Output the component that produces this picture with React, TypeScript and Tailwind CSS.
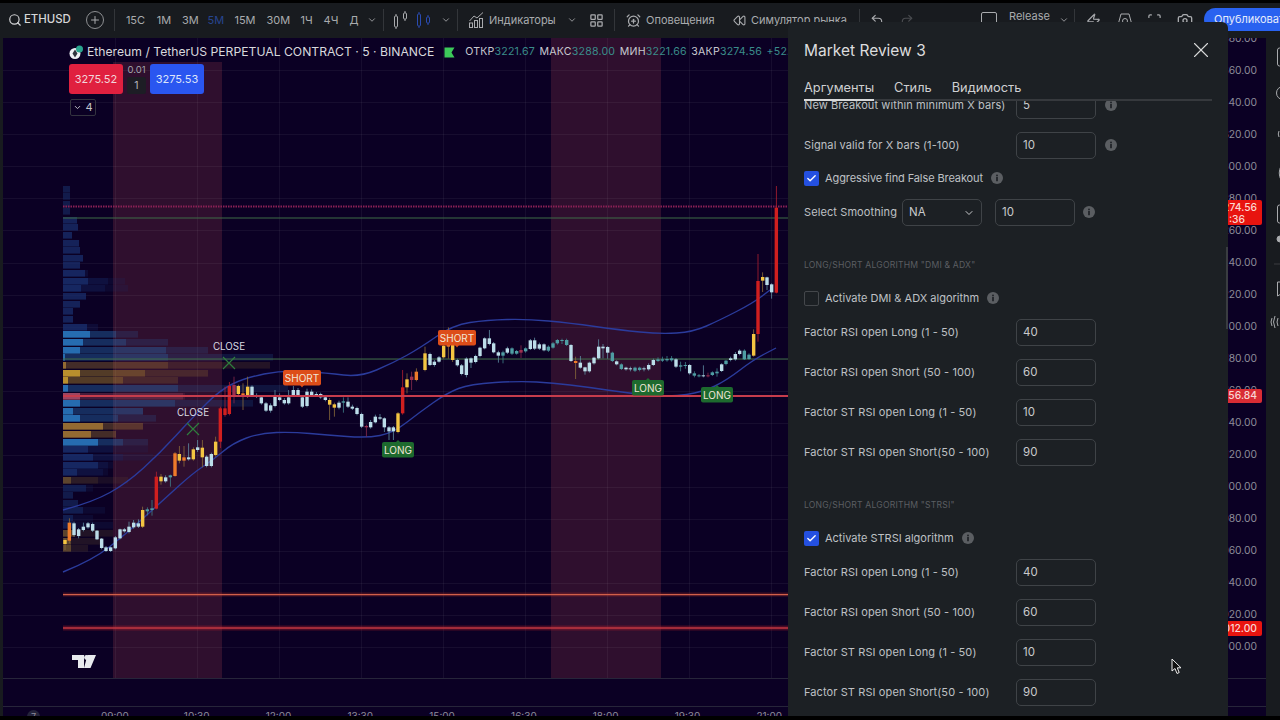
import { AlarmClockPlus, Camera, Check, ChevronDown, LayoutGrid, Plus, Redo2, Rewind, Scan, Search, Undo2, X, Zap } from 'lucide-react';

const COLORS: Record<string, string> = { r: '#d01f1f', y: '#f4c542', o: '#ee7a2a', b: '#bcdde9', t: '#4f9da3', d: '#9c2f4f' };

// [x, top, bottom, wickTop, wickBottom, colour] read off the 3x crops
type Candle = [number, number, number, number, number, string];

const LEFT: Candle[] = [
  [15, 510, 522, 505, 540, 'y'], [28, 458, 512, 445, 520, 'o'], [42, 460, 495, 455, 500, 'b'], [56, 478, 498, 474, 505, 'b'],
  [70, 470, 480, 458, 484, 'b'], [84, 460, 472, 456, 476, 'b'], [98, 462, 482, 458, 486, 'b'], [111, 482, 508, 480, 510, 'b'],
  [125, 506, 534, 504, 538, 'b'], [138, 532, 543, 528, 546, 'b'], [152, 532, 543, 530, 546, 'b'], [166, 502, 535, 498, 538, 'b'],
  [180, 478, 505, 476, 508, 'b'], [193, 478, 484, 474, 488, 'b'], [207, 470, 486, 455, 490, 'b'], [221, 458, 472, 450, 476, 'b'],
  [235, 460, 470, 448, 474, 'b'], [248, 420, 470, 410, 474, 'y'], [262, 418, 424, 412, 436, 't'], [276, 415, 420, 390, 437, 't'],
  [289, 320, 416, 305, 418, 'r'], [303, 320, 334, 312, 344, 'y'], [317, 322, 334, 316, 338, 'b'], [331, 316, 322, 314, 350, 't'],
  [345, 250, 318, 246, 320, 'o'], [358, 252, 272, 228, 280, 'y'], [372, 262, 272, 228, 290, 'o'], [386, 262, 268, 220, 272, 'b'],
  [400, 238, 268, 232, 272, 'y'], [413, 232, 240, 210, 246, 'b'], [427, 233, 262, 210, 292, 'y'], [440, 260, 288, 256, 292, 'b'],
  [454, 252, 288, 248, 292, 'b'], [467, 215, 255, 200, 260, 'y'], [481, 115, 215, 110, 234, 'r'], [495, 115, 135, 50, 140, 'r'],
  [508, 48, 132, 36, 136, 'r'], [522, 45, 75, 20, 100, 'd'], [535, 48, 72, 44, 76, 'y'], [549, 70, 75, 40, 120, 'o'],
  [563, 50, 78, 20, 84, 'y'], [576, 50, 75, 46, 80, 'b'], [590, 75, 80, 70, 84, 'b'], [604, 82, 100, 78, 104, 'b'],
  [618, 100, 122, 96, 126, 'b'], [632, 106, 122, 100, 128, 'b'], [645, 80, 108, 60, 112, 'b'], [659, 82, 90, 70, 94, 'b'],
  [673, 90, 100, 84, 104, 'b'], [686, 82, 100, 60, 104, 'b'], [700, 60, 75, 48, 78, 'b'], [714, 60, 75, 54, 80, 'b'],
  [727, 82, 110, 78, 114, 'b'], [741, 65, 108, 56, 112, 'b'], [755, 65, 75, 58, 80, 'b'], [769, 72, 75, 66, 78, 'b'],
  [782, 72, 82, 68, 86, 'b'], [796, 82, 90, 78, 94, 'b'], [809, 90, 104, 84, 150, 'y'], [823, 103, 113, 98, 140, 'y'],
  [837, 98, 113, 92, 118, 'b'], [850, 94, 98, 82, 128, 't'], [864, 95, 110, 82, 114, 'b'], [877, 110, 116, 104, 120, 'b'],
  [891, 114, 132, 110, 136, 'b'], [905, 132, 170, 128, 174, 'b'], [919, 168, 172, 164, 200, 'd'], [932, 156, 172, 150, 176, 'b'],
  [946, 140, 157, 134, 160, 'b'], [960, 142, 146, 132, 150, 'b'], [973, 145, 172, 142, 186, 'b'], [987, 172, 184, 168, 210, 'b'],
  [1000, 172, 184, 168, 210, 'b'], [1014, 130, 186, 126, 190, 'y'], [1028, 52, 130, 0, 134, 'r'], [1041, 28, 52, 10, 70, 'y'],
  [1055, 20, 30, 5, 60, 'd'], [1069, 5, 30, -5, 34, 'o'],
];

const RIGHT: Candle[] = [
  [15, 520, 570, 500, 574, 'y'], [30, 522, 555, 518, 558, 'b'], [43, 545, 555, 540, 560, 'b'], [57, 532, 545, 528, 548, 'b'],
  [71, 497, 532, 480, 536, 'y'], [85, 490, 500, 442, 536, 'o'], [98, 495, 540, 490, 546, 'y'], [112, 540, 556, 536, 560, 'b'],
  [125, 556, 582, 552, 586, 'b'], [139, 536, 585, 532, 592, 'b'], [153, 535, 548, 532, 564, 'b'], [167, 528, 546, 524, 550, 'b'],
  [180, 503, 528, 500, 532, 'b'], [194, 475, 505, 472, 508, 'b'], [208, 475, 492, 450, 496, 'b'], [221, 490, 517, 486, 520, 'b'],
  [235, 517, 527, 512, 548, 'b'], [249, 517, 527, 512, 550, 't'], [262, 505, 518, 500, 522, 'b'], [276, 505, 521, 502, 525, 't'],
  [290, 513, 521, 510, 524, 't'], [303, 510, 518, 496, 534, 'd'], [317, 505, 514, 502, 518, 't'], [331, 481, 507, 477, 510, 'b'],
  [344, 481, 506, 473, 510, 'b'], [358, 493, 506, 488, 510, 'b'], [372, 493, 511, 490, 514, 'b'], [385, 500, 512, 496, 516, 't'],
  [399, 490, 503, 486, 506, 't'], [412, 480, 490, 477, 494, 't'], [426, 480, 483, 476, 492, 't'], [440, 480, 495, 476, 498, 't'],
  [453, 495, 543, 492, 546, 'b'], [467, 543, 549, 530, 597, 'o'], [481, 548, 563, 528, 566, 'b'], [495, 562, 574, 560, 584, 'b'],
  [508, 548, 574, 545, 578, 'b'], [522, 533, 550, 530, 554, 'b'], [536, 500, 535, 478, 538, 'b'], [549, 500, 505, 492, 535, 'b'],
  [563, 501, 518, 498, 536, 'b'], [577, 518, 543, 515, 546, 't'], [590, 544, 553, 541, 556, 'b'], [604, 553, 567, 550, 570, 't'],
  [618, 563, 568, 560, 572, 'b'], [631, 565, 568, 560, 574, 'b'], [645, 563, 572, 560, 576, 't'], [659, 563, 570, 560, 574, 't'],
  [672, 565, 568, 560, 574, 'b'], [686, 555, 568, 550, 572, 'b'], [700, 540, 555, 536, 558, 'b'], [714, 538, 543, 532, 546, 't'],
  [727, 538, 542, 530, 546, 't'], [741, 537, 541, 528, 545, 't'], [755, 535, 541, 528, 545, 't'], [768, 538, 560, 534, 564, 'b'],
  [782, 556, 560, 545, 574, 't'], [796, 555, 558, 546, 566, 't'], [809, 555, 580, 552, 584, 'b'], [823, 580, 587, 574, 592, 't'],
  [837, 586, 589, 582, 592, 't'], [850, 586, 589, 556, 592, 'b'], [864, 586, 589, 578, 592, 'd'], [877, 577, 585, 574, 588, 't'],
  [891, 575, 580, 565, 590, 't'], [905, 553, 573, 550, 576, 'b'], [918, 542, 552, 540, 556, 't'], [932, 535, 540, 530, 544, 'b'],
  [946, 522, 538, 516, 542, 'b'], [959, 512, 522, 508, 526, 'b'], [973, 512, 538, 508, 540, 't'], [987, 524, 537, 520, 540, 't'],
  [1001, 462, 527, 448, 530, 'y'], [1014, 303, 462, 222, 485, 'r'], [1028, 291, 302, 277, 336, 'y'], [1041, 292, 315, 290, 330, 'b'],
  [1055, 313, 337, 310, 356, 'b'], [1069, 83, 338, 18, 340, 'r'],
];

// volume profile rows: [y, bright, mid, faint, kind]
const PROFILE: [number, number, number, number, string][] = [
  [186, 7, 0, 0, 'f'], [193, 7, 0, 0, 'f'], [201, 7, 0, 0, 'f'], [208, 7, 0, 0, 'f'], [217, 14, 0, 0, 'k'], [224, 15, 0, 0, 'k'],
  [232, 9, 0, 0, 'k'], [240, 16, 0, 0, 'k'], [247, 17, 0, 0, 'k'], [255, 20, 0, 0, 'k'], [262, 17, 0, 0, 'k'], [270, 22, 25, 0, 'k'],
  [278, 25, 45, 62, 'k'], [285, 18, 42, 65, 'k'], [293, 23, 0, 0, 'k'], [301, 17, 0, 0, 'k'], [308, 10, 0, 0, 'k'], [316, 10, 0, 0, 'k'],
  [324, 24, 35, 0, 'k'], [331, 27, 53, 75, 'u'], [339, 20, 63, 105, 'u'], [347, 17, 103, 145, 'u'], [354, 2, 105, 210, 'u'],
  [362, 3, 105, 207, 'a'], [370, 17, 82, 145, 'g'], [377, 5, 60, 115, 'g'], [385, 5, 115, 225, 'u'], [393, 17, 120, 122, 'p'],
  [400, 17, 112, 190, 'u'], [408, 10, 80, 80, 'u'], [415, 17, 55, 93, 'u'], [423, 40, 80, 80, 'a'], [431, 28, 53, 53, 'a'],
  [439, 35, 60, 85, 'u'], [446, 25, 50, 85, 'k'], [454, 30, 60, 90, 'k'], [462, 35, 45, 50, 'k'], [469, 14, 40, 45, 'k'],
  [477, 8, 35, 65, 'c'], [485, 23, 30, 0, 'f'], [492, 10, 0, 0, 'f'], [500, 15, 0, 0, 'f'], [507, 20, 42, 0, 'f'], [515, 10, 30, 0, 'f'],
  [522, 10, 50, 0, 'f'], [530, 12, 50, 0, 'c'], [538, 8, 40, 0, 'c'], [545, 8, 25, 0, 'c'],
];

const PROFILE_FILL: Record<string, string> = { f: '#16265c', k: '#1a3070', u: '#2a7cc4', a: '#a87a34', c: '#6a5030', g: '#d3a530', p: '#b0506a' };

const UPPER = [[63, 510], [93, 502], [127, 483], [160, 453], [193, 417], [220, 390], [245, 378], [283, 370], [327, 373], [360, 377], [393, 363], [420, 348], [453, 325], [487, 320], [527, 319], [570, 323], [620, 330], [660, 334], [693, 332], [720, 320], [753, 303], [770, 290]];
const LOWER = [[63, 572], [93, 560], [127, 533], [160, 503], [193, 473], [213, 460], [233, 443], [260, 433], [293, 432], [327, 435], [367, 438], [393, 433], [420, 412], [447, 393], [470, 384], [520, 381], [553, 383], [587, 387], [627, 393], [670, 397], [703, 392], [727, 380], [753, 360], [776, 348]];

const smooth = (pts: number[][]) => {
  let d = `M${pts[0][0]} ${pts[0][1]}`;
  for (let i = 1; i < pts.length - 1; i++) {
    const mx = (pts[i][0] + pts[i + 1][0]) / 2;
    const my = (pts[i][1] + pts[i + 1][1]) / 2;
    d += ` Q${pts[i][0]} ${pts[i][1]} ${mx} ${my}`;
  }
  const last = pts[pts.length - 1];
  return d + ` L${last[0]} ${last[1]}`;
};

const GRID_X = [115, 197, 279, 361, 443, 525, 607, 689, 771, 853, 935, 1017, 1099, 1181];
const GRID_Y = [70, 102, 134, 166, 198, 230, 263, 295, 327, 359, 391, 423, 455, 487, 519, 551, 583, 615, 647];
const PRICES = ['3380.00', '3360.00', '3340.00', '3320.00', '3300.00', '3280.00', '3260.00', '3240.00', '3220.00', '3200.00', '3180.00', '3160.00', '3140.00', '3120.00', '3100.00', '3080.00', '3060.00', '3040.00', '3020.00', '3000.00'];
const TIMES = ['09:00', '10:30', '12:00', '13:30', '15:00', '16:30', '18:00', '19:30', '21:00', '22:30', '00:00', '01:30', '03:00', '04:30'];

function CandleSet({ items, bx, by }: { items: Candle[]; bx: number; by: number }) {
  return (
    <g>
      {items.map(([x, top, bottom, wt, wb, c], i) => {
        const cx = bx + x / 3;
        const wick = c === 'b' ? '#5f8ea3' : c === 'y' || c === 'o' ? '#8a6a3a' : c === 'r' ? '#b02030' : c === 't' ? '#3f7f8a' : '#8a2a4c';
        return (
          <g key={i}>
            <rect x={cx - 0.4} y={by + wt / 3} width={0.8} height={(wb - wt) / 3} fill={wick} />
            <rect x={cx - 1.7} y={by + top / 3} width={3.4} height={Math.max((bottom - top) / 3, 1)} fill={COLORS[c]} />
          </g>
        );
      })}
    </g>
  );
}

function Badge({ x, y, w, text, fill, up }: { x: number; y: number; w: number; text: string; fill: string; up?: boolean }) {
  return (
    <g>
      <rect x={x - w / 2} y={y - 8} width={w} height={15.5} rx={2} fill={fill} />
      {up ? <path d={`M${x - 2} ${y - 8}L${x} ${y - 10}L${x + 2} ${y - 8}Z`} fill={fill} /> : <path d={`M${x - 2} ${y + 7}L${x} ${y + 9.5}L${x + 2} ${y + 7}Z`} fill={fill} />}
      <text x={x} y={y + 3.6} textAnchor="middle" fontSize="10" fill="#f1e6d8" fontFamily="Inter, sans-serif">{text}</text>
    </g>
  );
}

function CloseMark({ x, y }: { x: number; y: number }) {
  return (
    <g>
      <text x={x} y={y - 13} textAnchor="middle" fontSize="9.8" fill="#d9d9e2" fontFamily="Inter, sans-serif">CLOSE</text>
      <path d={`M${x - 6} ${y - 6}L${x + 6} ${y + 6}M${x + 6} ${y - 6}L${x - 6} ${y + 6}`} stroke="#2f7d3d" strokeWidth="1.2" />
    </g>
  );
}

function ChartDrawing() {
  return (
    <svg viewBox="3 38 1225 640" className="absolute inset-0 w-[1225px] h-[640px]">
      <rect x="113" y="62" width="109" height="616" fill="#2f0f2e" />
      <rect x="551" y="38" width="110" height="640" fill="#2f0f2e" />
      {GRID_X.map((x) => <rect key={x} x={x} y="38" width="1" height="640" fill="#ffffff" opacity="0.05" />)}
      {GRID_Y.map((y) => <rect key={y} x="3" y={y} width="1225" height="1" fill="#ffffff" opacity="0.05" />)}

      {PROFILE.map(([y, a, b, c, kind]) => (
        <g key={y} fill={PROFILE_FILL[kind]}>
          {c > 0 && <rect x="63" y={y} width={c} height="6.6" opacity="0.16" />}
          {b > 0 && <rect x="63" y={y} width={b} height="6.6" opacity="0.24" />}
          <rect x="63" y={y} width={a} height="6.6" opacity={kind === 'k' || kind === 'f' ? 0.7 : 0.8} />
        </g>
      ))}

      <line x1="63" y1="206.5" x2="788" y2="206.5" stroke="#8a2055" strokeWidth="2" strokeDasharray="1.5 1" />
      <rect x="63" y="217.5" width="725" height="1" fill="#3f6c46" />
      <rect x="63" y="358.5" width="725" height="1" fill="#3f6c46" />

      <path d={smooth(UPPER)} fill="none" stroke="#2b3b9c" strokeWidth="1.4" />
      <path d={smooth(LOWER)} fill="none" stroke="#2b3b9c" strokeWidth="1.4" />

      <CandleSet items={LEFT} bx={60} by={370} />
      <CandleSet items={RIGHT} bx={420} by={180} />

      <rect x="63" y="395" width="725" height="2" fill="#c63c4c" />
      <rect x="63" y="592.5" width="725" height="4" fill="#b82e20" opacity="0.3" />
      <rect x="63" y="594" width="725" height="1.2" fill="#d0604a" />
      <rect x="63" y="625.5" width="725" height="5" fill="#b81f2a" opacity="0.35" />
      <rect x="63" y="627.3" width="725" height="1.4" fill="#c83a44" />

      <CloseMark x={229} y={363} />
      <CloseMark x={193} y={429} />
      <Badge x={302} y={378} w={38} text="SHORT" fill="#dd4d19" />
      <Badge x={457} y={338} w={38} text="SHORT" fill="#dd4d19" />
      <Badge x={398} y={450} w={32} text="LONG" fill="#1d6a2e" up />
      <Badge x={648} y={388} w={32} text="LONG" fill="#1d6a2e" up />
      <Badge x={717} y={395} w={32} text="LONG" fill="#1d6a2e" up />

      {/* tv logo */}
      <path d="M72 655H84V668H78V660H72ZM87.5 655H96L90.5 668H84Z" fill="#e8eaee" />
      <circle cx="86.5" cy="657.5" r="2.4" fill="#e8eaee" />
    </svg>
  );
}

function Legend() {
  return (
    <div className="absolute left-[66px] top-[6px] flex flex-col">
      <div className="flex items-center h-[16px] whitespace-nowrap">
        <svg width="15" height="15" viewBox="0 0 15 15" className="mr-[3px]">
          <circle cx="6" cy="8.5" r="5.5" fill="#eef1f5" />
          <path d="M6 4.5L8.5 8.5L6 12.5L3.5 8.5Z" fill="#30343e" />
          <circle cx="10.5" cy="4" r="3.5" fill="#2aa58f" />
        </svg>
        <span className="text-[12.2px] text-[#d8d9dd]">Ethereum / TetherUS PERPETUAL CONTRACT · 5 · BINANCE</span>
        <svg width="11" height="11" viewBox="0 0 11 11" className="ml-[10px]"><path d="M0.5 0.5H10.5L7.5 5.5L10.5 10.5H0.5Z" fill="#3dc95a" /></svg>
        <div className="flex gap-[4.5px] text-[10.6px] ml-[10px] tracking-[0.2px]">
          <span className="text-[#c8cad0]">ОТКР<span className="text-[#3a8d8a]">3221.67</span></span>
          <span className="text-[#c8cad0]">МАКС<span className="text-[#3a8d8a]">3288.00</span></span>
          <span className="text-[#c8cad0]">МИН<span className="text-[#3a8d8a]">3221.66</span></span>
          <span className="text-[#c8cad0]">ЗАКР<span className="text-[#3a8d8a]">3274.56</span></span>
          <span className="text-[#3a8d8a]">+52.89 (+1.64%)</span>
        </div>
      </div>
      <div className="flex mt-[4px] h-[30px]">
        <div className="w-[54px] rounded-[3px] bg-[#e0203f] text-[#f2d5da] text-[11px] flex items-center justify-center">3275.52</div>
        <div className="w-[27px] flex flex-col items-center">
          <span className="text-[9.5px] text-[#a3a5ad] h-[13px] leading-[11px]">0.01</span>
          <span className="w-[19px] h-[17px] rounded-[2px] bg-[#1d1d25] text-[10.5px] text-[#b5b6bb] flex items-center justify-center">1</span>
        </div>
        <div className="w-[54px] rounded-[3px] bg-[#2a56f0] text-[#dde4fb] text-[11px] flex items-center justify-center">3275.53</div>
      </div>
      <div className="mt-[5px] ml-[1px] w-[26px] h-[17px] rounded-[2px] border border-[#33333f] flex items-center justify-center gap-[3px] text-[11px] text-[#c4c5cc]">
        <ChevronDown size={9} strokeWidth={2.5} />4
      </div>
    </div>
  );
}

function PriceAxis() {
  return (
    <div className="w-[60px] h-[640px] overflow-hidden relative">
      <div className="flex flex-col -mt-[15px] items-end pr-[9px] text-[10.3px] text-[#8d8c99]">
        {PRICES.map((p) => <span key={p} className="h-[32px] flex items-center">{p}</span>)}
      </div>
      <div className="absolute right-[4px] top-[162px] w-[56px] h-[25px] rounded-[2px] bg-[#e8140f] text-[10.3px] font-medium text-[#fbd8d0] flex flex-col items-end pr-[5px] leading-[12px] justify-center">
        <span>3274.56</span><span className="pr-[12px]">:36</span>
      </div>
      <div className="absolute right-[4px] top-[351px] w-[56px] h-[14px] rounded-[2px] bg-[#d92c34] text-[10.3px] font-medium text-[#f8d5d5] flex items-center justify-end pr-[5px]">3156.84</div>
      <div className="absolute right-[4px] top-[583px] w-[56px] h-[15px] rounded-[2px] bg-[#e8140f] text-[10.3px] font-medium text-[#f8d5d5] flex items-center justify-end pr-[5px]">3012.00</div>
    </div>
  );
}

function Toolbar() {
  const intervals = [
    { t: '15С', w: 'w-[21px]' }, { t: '1М', w: 'w-[15px]' }, { t: '3М', w: 'w-[15px]' }, { t: '5М', w: 'w-[16px]' }, { t: '15М', w: 'w-[22px]' },
    { t: '30М', w: 'w-[23px]' }, { t: '1Ч', w: 'w-[13px]' }, { t: '4Ч', w: 'w-[15px]' }, { t: 'Д', w: 'w-[10px]' },
  ];
  return (
    <div className="h-[32px] bg-[#181b1f] flex items-center pl-[8px] pt-[2px] text-[11px] text-[#a9abae] whitespace-nowrap overflow-hidden">
      <Search size={14} className="text-[#d5d6d8] shrink-0" />
      <span className="ml-[2px] w-[48px] shrink-0 font-medium text-[#d5d6d8] text-[11.4px]">ETHUSD</span>
      <span className="ml-[14px] w-[18px] h-[18px] shrink-0 rounded-full border border-[#8d8f92] flex items-center justify-center"><Plus size={12} /></span>
      <span className="ml-[10px] w-px h-[22px] shrink-0 bg-[#33363a]" />
      <div className="ml-[10px] flex items-center gap-[10.5px] shrink-0">
        {intervals.map((i) => <span key={i.t} className={`${i.w} text-center ${i.t === '5М' ? 'text-[#27458f]' : ''}`}>{i.t}</span>)}
      </div>
      <ChevronDown size={10} className="ml-[8px] shrink-0" />
      <span className="ml-[6px] w-px h-[22px] shrink-0 bg-[#33363a]" />
      <svg width="16" height="18" viewBox="0 0 16 18" fill="none" stroke="#a9abae" className="ml-[9px] shrink-0">
        <rect x="1.5" y="5" width="3" height="11" rx="1" /><path d="M3 3v2M3 16v2" />
        <rect x="10.5" y="2" width="3" height="6" rx="1" /><path d="M12 0v2M12 8v2" />
      </svg>
      <svg width="16" height="18" viewBox="0 0 16 18" fill="none" stroke="#2a4bb0" className="ml-[7px] shrink-0">
        <rect x="1.5" y="3" width="3" height="12" rx="1" /><path d="M3 1v2M3 15v2" />
        <rect x="10.5" y="6" width="3" height="6" rx="1" /><path d="M12 4v2M12 12v2" />
      </svg>
      <ChevronDown size={10} className="ml-[9px] shrink-0" />
      <span className="ml-[6px] w-px h-[22px] shrink-0 bg-[#33363a]" />
      <svg width="15" height="16" viewBox="0 0 15 16" fill="none" stroke="#a9abae" className="ml-[11px] shrink-0">
        <path d="M0.5 9L5 4L8 6L14 0.5" /><rect x="0.5" y="11" width="3" height="4.5" /><rect x="5.5" y="8.5" width="3" height="7" /><rect x="10.5" y="6.5" width="3" height="9" />
      </svg>
      <span className="ml-[5px] w-[67px] shrink-0">Индикаторы</span>
      <ChevronDown size={10} className="ml-[11px] shrink-0" />
      <LayoutGrid size={15} className="ml-[12px] shrink-0" />
      <span className="ml-[10px] w-px h-[22px] shrink-0 bg-[#33363a]" />
      <AlarmClockPlus size={15} className="ml-[11px] shrink-0" />
      <span className="ml-[5px] w-[69px] shrink-0">Оповещения</span>
      <Rewind size={13} className="ml-[18px] shrink-0" />
      <span className="ml-[5px] w-[96px] shrink-0">Симулятор рынка</span>
      <span className="ml-[12px] w-px h-[22px] shrink-0 bg-[#33363a]" />
      <Undo2 size={14} className="ml-[10px] shrink-0" />
      <Redo2 size={14} className="ml-[16px] shrink-0 text-[#4a4c50]" />
      <span className="ml-[67px] w-[16px] h-[16px] shrink-0 rounded-[2px] border border-[#a9abae]" />
      <span className="ml-[12px] -mt-[7px] w-[40px] shrink-0">Release</span>
      <ChevronDown size={10} className="ml-[10px] shrink-0" />
      <span className="ml-[5px] w-px h-[22px] shrink-0 bg-[#33363a]" />
      <Zap size={15} className="ml-[11px] shrink-0" />
      <svg width="16" height="16" viewBox="0 0 16 16" fill="none" stroke="#a9abae" className="ml-[16px] shrink-0"><path d="M4 2H12L15 13Q15 15 13 15H3Q1 15 1 13Z" /><circle cx="8" cy="9" r="2.5" /></svg>
      <Scan size={15} className="ml-[14px] shrink-0" />
      <Camera size={16} className="ml-[15px] shrink-0" />
      <span className="ml-[11px] -mt-[2px] h-[23px] w-[90px] shrink-0 rounded-l-full bg-[#2962f0] text-[#e7ecfb] pl-[10px] flex items-center">Опубликовать</span>
    </div>
  );
}

function InfoDot() {
  return (
    <svg width="12" height="12" viewBox="0 0 13 13">
      <circle cx="6.5" cy="6.5" r="6.5" fill="#5b5e62" />
      <rect x="5.6" y="5.4" width="1.8" height="4.6" fill="#1c2024" />
      <rect x="5.6" y="2.9" width="1.8" height="1.7" fill="#1c2024" />
    </svg>
  );
}

function Field({ value, className }: { value: string; className?: string }) {
  return (
    <span className={`h-[27px] rounded-[5px] border border-[#3f4347] flex items-center pl-[6px] pt-[1px] text-[11.5px] text-[#c9cacc] ${className ?? 'w-[80px]'}`}>{value}</span>
  );
}

function NumberRow({ label, value, info }: { label: string; value: string; info?: boolean }) {
  return (
    <div className="h-[40px] flex items-center">
      <span className="w-[212px] whitespace-nowrap tracking-[0.1px] pt-[1px]">{label}</span>
      <Field value={value} />
      {info && <span className="ml-[9px] flex"><InfoDot /></span>}
    </div>
  );
}

function CheckRow({ label, checked, className, tight }: { label: string; checked?: boolean; className: string; tight?: boolean }) {
  return (
    <div className={`flex items-center ${className}`}>
      {checked ? (
        <span className="w-[15px] h-[15px] rounded-[2px] bg-[#2450e0] flex items-center justify-center"><Check size={11} strokeWidth={3} className="text-white" /></span>
      ) : (
        <span className="w-[15px] h-[15px] rounded-[2px] border border-[#44474b]" />
      )}
      <span className={`ml-[6px] pt-[1px] ${tight ? 'tracking-[-0.1px]' : ''}`}>{label}</span>
      <span className="ml-[8px] flex"><InfoDot /></span>
    </div>
  );
}

function SectionTitle({ text, className }: { text: string; className: string }) {
  return <div className={`text-[8.6px] tracking-[0.2px] text-[#5b5e62] flex items-center h-[14px] ${className}`}>{text}</div>;
}

function SettingsPanel() {
  return (
    <div className="absolute left-[788px] top-[22px] w-[440px] h-[694px] rounded-t-[6px] bg-[#1c2024] flex flex-col">
      <div className="h-[56px] shrink-0 pl-[16px] pr-[14px] flex items-center justify-between">
        <span className="text-[15.5px] font-normal text-[#dcddde] pt-[1px]">Market Review 3</span>
        <X size={26} strokeWidth={1} className="text-[#d8d9da]" />
      </div>
      <div className="mx-[16px] shrink-0 h-[23px] flex items-start gap-[20px] text-[12.8px] text-[#cfd0d2] border-b-2 border-[#36393d] relative">
        <span className="relative h-[23px]">
          Аргументы
          <span className="absolute left-0 right-0 top-[21px] h-[2px] bg-[#d8d9da]" />
        </span>
        <span>Стиль</span>
        <span>Видимость</span>
      </div>
      <div className="flex-1 overflow-hidden pl-[16px] text-[11px] text-[#bfc1c4]">
        <div className="-mt-[16px]">
          <NumberRow label="New Breakout within minimum X bars)" value="5" info />
          <NumberRow label="Signal valid for X bars (1-100)" value="10" info />
          <CheckRow label="Aggressive find False Breakout" checked tight className="h-[26px]" />
          <div className="h-[42px] flex items-center">
            <span className="w-[98px] tracking-[0.1px] pt-[1px]">Select Smoothing</span>
            <span className="w-[80px] h-[27px] rounded-[5px] border border-[#3f4347] flex items-center justify-between px-[6px] pt-[1px] text-[11.5px] text-[#c9cacc]">NA<ChevronDown size={12} /></span>
            <Field value="10" className="ml-[13px] w-[80px]" />
            <span className="ml-[8px] flex"><InfoDot /></span>
          </div>
          <SectionTitle text={'LONG/SHORT ALGORITHM "DMI & ADX"'} className="mt-[25px]" />
          <CheckRow label="Activate DMI & ADX algorithm" className="mt-[12px] h-[28px]" />
          <div>
            <NumberRow label="Factor RSI open Long (1 - 50)" value="40" />
            <NumberRow label="Factor RSI open Short (50 - 100)" value="60" />
            <NumberRow label="Factor ST RSI open Long (1 - 50)" value="10" />
            <NumberRow label="Factor ST RSI open Short(50 - 100)" value="90" />
          </div>
          <SectionTitle text={'LONG/SHORT ALGORITHM "STRSI"'} className="mt-[26px]" />
          <CheckRow label="Activate STRSI algorithm" checked className="mt-[12px] h-[28px]" />
          <div>
            <NumberRow label="Factor RSI open Long (1 - 50)" value="40" />
            <NumberRow label="Factor RSI open Short (50 - 100)" value="60" />
            <NumberRow label="Factor ST RSI open Long (1 - 50)" value="10" />
            <NumberRow label="Factor ST RSI open Short(50 - 100)" value="90" />
          </div>
        </div>
      </div>
      {/* scrollbar */}
      <span className="absolute right-0 top-[225px] w-[2px] h-[82px] bg-[#3a3d41]" />
    </div>
  );
}

function RightRail() {
  // only the first few pixels of these tool icons are on screen
  return (
    <svg width="11" height="681" viewBox="0 0 11 681" fill="none" stroke="#a9abae" className="shrink-0">
      <rect x="8.5" y="10" width="12" height="18" rx="2" />
      <circle cx="14" cy="55" r="6.5" />
      <path d="M10 93Q8.5 96 10 99" />
      <path d="M12 128Q8.5 135 12 142" />
      <rect x="8.5" y="167" width="12" height="18" rx="2" />
      <circle cx="11" cy="201" r="3" fill="#a9abae" />
      <path d="M5 226H11" stroke="#3a3d41" />
      <path d="M8.5 244H16M8.5 244V258L12 256" />
      <path d="M3 280Q1 284 3 288M6 278Q3 284 6 290M9 280Q7 284 9 288" />
    </svg>
  );
}

export default function App() {
  return (
    <div className="relative w-[1280px] h-[720px] overflow-hidden bg-black flex flex-col font-['Inter',sans-serif]">
      <div className="h-[3px] shrink-0" />
      <Toolbar />
      <div className="h-[681px] shrink-0 flex bg-[#181b1f] pt-[3px] pl-[3px]">
        <div className="w-[1263px] h-[678px] bg-[#0b0024] flex flex-col overflow-hidden">
          <div className="flex h-[640px] shrink-0">
            <div className="relative flex-1 overflow-hidden">
              <ChartDrawing />
              <Legend />
            </div>
            <PriceAxis />
          </div>
          <div className="h-px bg-[#27253a] shrink-0" />
          <div className="h-[27px] shrink-0" />
          <div className="h-px bg-[#27253a] shrink-0" />
          <div className="relative flex pl-[71px] pt-[2px] text-[10px] text-[#8d8c99]">
            <span className="absolute left-[24px] top-[3px] w-[13px] h-[13px] rounded-full bg-[#24233a] text-[9px] text-center">7</span>
            {TIMES.map((t) => <span key={t} className="w-[81.8px] shrink-0 text-center">{t}</span>)}
          </div>
        </div>
        <div className="w-[3px] shrink-0" />
        <RightRail />
      </div>
      <div className="flex-1 bg-black relative z-10" />
      <SettingsPanel />
      {/* mouse pointer */}
      <svg width="12" height="17" viewBox="0 0 12 17" className="absolute left-[1171px] top-[658px]">
        <path d="M1 1V13L4 10.5L6 15.5L8.2 14.5L6.3 9.8H10Z" fill="#111" stroke="#eee" strokeWidth="1" />
      </svg>
    </div>
  );
}
